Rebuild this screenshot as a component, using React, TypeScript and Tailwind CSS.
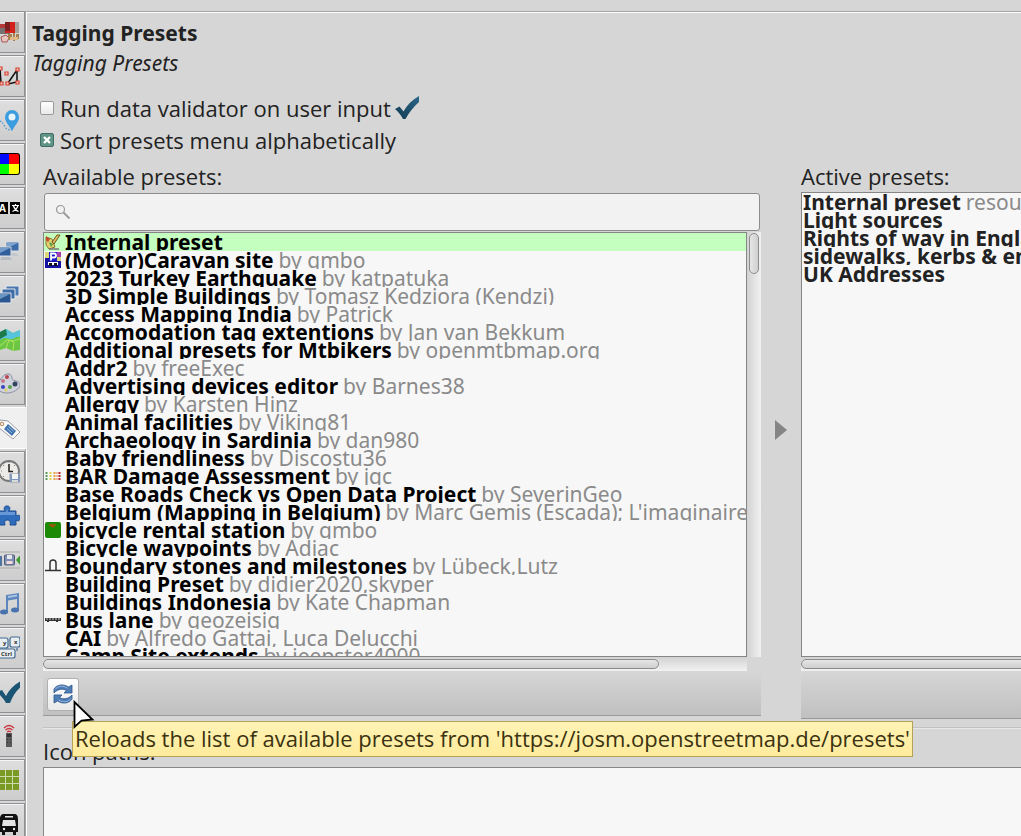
import React, { useState } from 'react';
import { clsx } from 'clsx';

interface Preset {
  name: string;
  note?: string;
  icon?: React.ReactNode;
}

interface PrefTab {
  id: string;
  label: string;
  icon: React.ReactNode;
}

const CheckMark = ({ className }: { className?: string }) => (
  <svg viewBox="0 0 24 24" className={className} aria-hidden="true">
    <defs>
      <linearGradient id="checkFill" x1="0" y1="1" x2="1" y2="0">
        <stop offset="0" stopColor="#123a52" />
        <stop offset="1" stopColor="#2b6788" />
      </linearGradient>
    </defs>
    <path d="M0 13 L4.500 10.500 L8.500 15.500 C12 9 17 4 24 0 V6 C18.500 11 14.500 16 10.500 23 H8 C6 19 3.500 16 0 13Z" fill="url(#checkFill)" />
  </svg>
);

const tabs: PrefTab[] = [
  {
    id: 'display',
    label: 'Display',
    icon: (
      <>
        <rect x="0" y="4" width="10" height="10" fill="#77726f" />
        <path d="M0 4h8v4H0z" fill="#b33a36" />
        <rect x="5" y="2" width="14" height="11" fill="#d3211c" />
        <path d="M5 2h5v9H5z" fill="#7d2020" />
        <path d="M15 2h4v11h-4z" fill="#a9a09b" />
        <path d="M1 17l5-2 3 3-2 4H2z" fill="#e4c6bf" stroke="#a55" />
        <path d="M8 14h4v6H8zM13 13h2v8h-2zM16 14h3v5h-3z" fill="#a8804f" />
        <path d="M10 17h8v3h-8z" fill="#dcb987" />
      </>
    ),
  },
  {
    id: 'validator-geometry',
    label: 'Geometry',
    icon: (
      <>
        <path d="M0 4L1 19M8 19L17 6V18L8 20" stroke="#111" strokeWidth="1.500" fill="none" />
        <g fill="#f6c9c2" stroke="#d8402f" strokeWidth="1.200">
          <path d="M-1 3h3v3h-3zM16 4h3v3h-3zM5 8h3v3H5zM0 18h3v3H0zM6 18h3v3H6zM16 17h3v3h-3z" />
        </g>
      </>
    ),
  },
  {
    id: 'gps',
    label: 'GPS points',
    icon: (
      <>
        <path d="M0 13c3 1 3 3 5 6s5 3 7 3" stroke="#3b95d4" strokeWidth="1.200" strokeDasharray="1.500 1.500" fill="none" />
        <path d="M12 2a7 7 0 0 1 7 7c0 5-4 8-7 14C9 17 5 14 5 9a7 7 0 0 1 7-7z" fill="#3b9ddf" />
        <circle cx="12" cy="9" r="3.500" fill="#e6f3fb" />
      </>
    ),
  },
  {
    id: 'colors',
    label: 'Colors',
    icon: (
      <>
        <rect x="-6" y="1" width="26" height="22" rx="3" fill="#000" />
        <path d="M0 2h9v10H0z" fill="#0008ff" />
        <path d="M9 2h8q2 0 2 2v8H9z" fill="#f00" />
        <path d="M0 12h9v10H0z" fill="#0f0" />
        <path d="M9 12h10v8q0 2-2 2H9z" fill="#ff0" />
      </>
    ),
  },
  {
    id: 'language',
    label: 'Language',
    icon: (
      <>
        <rect x="-2" y="6" width="10" height="12" fill="#000" />
        <rect x="10" y="6" width="11" height="12" fill="#000" />
        <text x="-1" y="16" fontSize="10" fontWeight="700" fill="#fff">A</text>
        <path d="M12 9.500h7M15.500 8v1.500M18 9.500c-1 3-3 5-5.500 6M13.500 10c1 3 2.500 4.500 5 5.500" stroke="#fff" strokeWidth="1.200" fill="none" />
      </>
    ),
  },
  {
    id: 'remote-servers',
    label: 'Servers',
    icon: (
      <>
        <path d="M10 13h6l3 3H8z" fill="#c4c8cc" />
        <path d="M6 2h13v9H6z" fill="#3c6ca8" stroke="#d8dde2" />
        <path d="M7 3h11L7 8z" fill="#7ca4d0" />
        <path d="M2 17h8l2 3H0z" fill="#b7bcc2" />
        <path d="M-3 7h14v9H-3z" fill="#315f9b" stroke="#d8dde2" />
        <path d="M0 8h10L0 13z" fill="#739cca" />
      </>
    ),
  },
  {
    id: 'windows',
    label: 'Windows',
    icon: (
      <>
        <path d="M4 19h14l2 3H2z" fill="#cfd0d2" />
        <path d="M6 2h13v10H6z" fill="#4b78b1" stroke="#e4e8ec" />
        <path d="M2 5h13v10H2z" fill="#3d6ca7" stroke="#e4e8ec" />
        <path d="M-3 9h14v10H-3z" fill="#2b5690" stroke="#e4e8ec" />
        <path d="M0 10h10L0 15z" fill="#6b95c5" />
      </>
    ),
  },
  {
    id: 'map',
    label: 'Map projection',
    icon: (
      <>
        <path d="M0 4l6-3 7 4 7-3v20l-7 1-7-3-6 2z" fill="#6cc644" />
        <path d="M0 4l6-3 7 4 7-3v7c-5-1-6 3-10 2s-6-2-10 1z" fill="#57c3dc" />
        <path d="M0 4l6-3 1 6-7 4z" fill="#1d7a4c" />
        <path d="M0 18l7-6 6 1 7-2" stroke="#8fdc5a" strokeWidth="1.500" fill="none" />
        <path d="M6 20l3-8 5 2-1 9" stroke="#b4e35a" fill="none" />
      </>
    ),
  },
  {
    id: 'paint',
    label: 'Map paint styles',
    icon: (
      <>
        <path d="M-3 14C1 5 5 1 9 2s2 5 4 6 7 1 7 5-7 8-13 8-10-3-10-7z" fill="#d0d3dd" stroke="#8c91a3" />
        <circle cx="7" cy="5" r="2" fill="#b8464e" />
        <circle cx="3" cy="9" r="2" fill="#c27a8a" />
        <circle cx="15" cy="12" r="2.500" fill="#32445e" />
        <circle cx="10" cy="15" r="2" fill="#5fa54a" />
        <circle cx="3" cy="15" r="2" fill="#3745b9" />
        <circle cx="6" cy="18" r="1.500" fill="#ddd060" />
      </>
    ),
  },
  {
    id: 'presets',
    label: 'Tagging Presets',
    icon: (
      <>
        <path d="M-2 8L0 4l8 1 12 11-7 7L-2 11z" fill="#fbfbfb" stroke="#999da3" />
        <circle cx="2" cy="8" r="1.800" fill="#eee" stroke="#b58450" />
        <path d="M8 8l8 7-4 5-8-7z" fill="#3f72ae" />
        <path d="M8.500 10.500l5 4.500M7 12.500l5 4.500" stroke="#b9d0ea" strokeWidth=".8" />
      </>
    ),
  },
  {
    id: 'autosave',
    label: 'Autosave',
    icon: (
      <>
        <circle cx="9" cy="11" r="10" fill="#ecebe7" stroke="#777" strokeWidth="1.800" />
        <path d="M9 4v7.500h4" stroke="#222" strokeWidth="1.500" fill="none" />
        <path d="M9 2v1M1 11h1M3 5l1 1M15 5l-1 1M3 17l1-1" stroke="#888" />
        <rect x="10" y="14" width="10" height="8" fill="#7d9ac2" stroke="#8d99ab" />
        <rect x="12" y="14" width="6" height="5" fill="#f4f4f4" />
        <rect x="12" y="20" width="6" height="2" fill="#d9d9d9" />
      </>
    ),
  },
  {
    id: 'plugins',
    label: 'Plugins',
    icon: (
      <>
        <path d="M-3 7h8c-2-4 0-5 2-5s4 1 2 5h7v5c4-2 4 0 4 2s-1 4-4 2v5H10c1-4-1-5-3-5s-3 2-2 5h-8z" fill="#2f6cbc" stroke="#1c4d92" />
        <path d="M-2 8h8l1-4 1 4h7v3H-2z" fill="#6698d6" />
      </>
    ),
  },
  {
    id: 'downloads',
    label: 'Offline mode',
    icon: (
      <>
        <path d="M0 4h20M0 20h20" stroke="#aaa" />
        <rect x="-6" y="8" width="8" height="10" fill="#5074a2" />
        <rect x="4.500" y="7" width="10" height="10" rx="1" fill="#7e8fb2" stroke="#515c78" />
        <rect x="7" y="7" width="5" height="4" fill="#e5e8ef" />
        <rect x="6.500" y="13" width="6" height="3" fill="#f2d9d9" />
        <path d="M21 6v12l-5-6z" fill="#3f9b31" />
      </>
    ),
  },
  {
    id: 'audio',
    label: 'Audio',
    icon: (
      <>
        <path d="M6 3l13-2v17h-2V7L8 8.500V20H6z" fill="#5c86bd" />
        <ellipse cx="4" cy="20" rx="4" ry="2.500" fill="#4873ad" />
        <ellipse cx="15" cy="18" rx="4" ry="2.500" fill="#4873ad" />
        <path d="M8 4l9-1.500v2L8 6z" fill="#a9c3e2" />
      </>
    ),
  },
  {
    id: 'shortcuts',
    label: 'Keyboard shortcuts',
    icon: (
      <>
        <g fill="#e8edf1" stroke="#426b91" strokeWidth="1.200">
          <rect x="-3" y="2" width="11" height="10" rx="2" />
          <rect x="10" y="1" width="10" height="10" rx="2" />
          <rect x="-6" y="13" width="21" height="9" rx="2" />
          <path d="M17 12v3" />
        </g>
        <g fontSize="6" fontWeight="700" fill="#333">
          <text x="3" y="9">y</text>
          <text x="14" y="8">x</text>
          <text x="1" y="20">Ctrl</text>
        </g>
      </>
    ),
  },
  {
    id: 'validator',
    label: 'Data validator',
    icon: <path d="M-3 12l5-2 4 6C9 10 14 5 21 1v6c-5 4-8 9-11 16H6C3 18 0 15-3 12z" fill="#1c5474" />,
  },
  {
    id: 'remote-control',
    label: 'Remote control',
    icon: (
      <>
        <path d="M4 4q5-5 10 0M5.500 6q3.500-3 7 0M7 8q2-1.500 4 0" stroke="#c8353c" strokeWidth="1.300" fill="none" />
        <rect x="6" y="9" width="6" height="14" fill="#5a5a5a" />
        <path d="M7 10h4v3H7zM7 15h1v1H7zM10 15h1v1h-1zM7 18h1v1H7zM10 18h1v1h-1z" fill="#333" />
      </>
    ),
  },
  {
    id: 'imagery',
    label: 'Imagery',
    icon: (
      <>
        <path d="M0 2h19v20H0z" fill="#799b26" />
        <path d="M0 8.500h19M0 15.500h19M5.500 2v20M12.500 2v20" stroke="#d0dbad" />
      </>
    ),
  },
  {
    id: 'transport',
    label: 'Public transport',
    icon: (
      <>
        <path d="M4 2h10c3 0 4 2 4 5v13h-2v3h-3v-3H5v3H2v-3H0V7c0-3 1-5 4-5z" fill="#111" />
        <path d="M5 4h8v1.500H5zM3 8h12l1 6H2z" fill="#e4e4e4" />
        <circle cx="4" cy="17" r="1.200" fill="#e4e4e4" />
        <circle cx="14" cy="17" r="1.200" fill="#e4e4e4" />
      </>
    ),
  },
];

const availablePresets: Preset[] = [
  {
    name: 'Internal preset',
    icon: (
      <>
        <path d="M1 3l6 2 3 8-6 2-3-4z" fill="#dfcf6e" stroke="#8a7332" />
        <path d="M1 2l4 3-2 3-2-2z" fill="#c44a2e" />
        <path d="M15 1l-6 9-2-2 5-7z" fill="#e3ba5b" stroke="#6a5420" />
        <path d="M4 15h10" stroke="#777" strokeWidth="1.500" />
        <path d="M4 8l4 2-2 3z" fill="#549a45" />
      </>
    ),
  },
  {
    name: '(Motor)Caravan site',
    note: 'by gmbo',
    icon: (
      <>
        <path d="M0 0h16v16H0z" fill="#1414a0" />
        <path d="M0 0h4v6H0zM12 5h4v4h-4z" fill="#ddd77b" />
        <path d="M11 0h5v5h-5z" fill="#a43fae" />
        <path d="M4 0h8v9H4z" fill="#1c1ccc" />
        <path d="M6 8.500V1.500h3q2 0 2 2t-2 2H6" stroke="#fff" strokeWidth="1.800" fill="none" />
        <path d="M3 10h10v3H3z" fill="#fff" />
        <path d="M4 11h3v3H4zM9 11h3v3H9z" fill="#111" />
      </>
    ),
  },
  { name: '2023 Turkey Earthquake', note: 'by katpatuka' },
  { name: '3D Simple Buildings', note: 'by Tomasz Kedziora (Kendzi)' },
  { name: 'Access Mapping India', note: 'by Patrick' },
  { name: 'Accomodation tag extentions', note: 'by Jan van Bekkum' },
  { name: 'Additional presets for Mtbikers', note: 'by openmtbmap.org' },
  { name: 'Addr2', note: 'by freeExec' },
  { name: 'Advertising devices editor', note: 'by Barnes38' },
  { name: 'Allergy', note: 'by Karsten Hinz' },
  { name: 'Animal facilities', note: 'by Viking81' },
  { name: 'Archaeology in Sardinia', note: 'by dan980' },
  { name: 'Baby friendliness', note: 'by Discostu36' },
  {
    name: 'BAR Damage Assessment',
    note: 'by jgc',
    icon: (
      <g strokeWidth="2" strokeDasharray="2 1">
        <path d="M1.500 4v8" stroke="#5a9a58" />
        <path d="M5.500 4v8" stroke="#dfd34c" />
        <path d="M9.500 4v8" stroke="#e2a03c" />
        <path d="M12 4v8" stroke="#e8774e" strokeWidth="1" />
        <path d="M14.500 4v8" stroke="#b32626" />
      </g>
    ),
  },
  { name: 'Base Roads Check vs Open Data Project', note: 'by SeverinGeo' },
  { name: 'Belgium (Mapping in Belgium)', note: "by Marc Gemis (Escada); L'imaginaire" },
  {
    name: 'bicycle rental station',
    note: 'by gmbo',
    icon: (
      <>
        <rect width="16" height="16" rx="2" fill="#1d8a06" />
        <path d="M4 3h7M6 4l3 1" stroke="#a2560c" strokeWidth="1.500" />
      </>
    ),
  },
  { name: 'Bicycle waypoints', note: 'by Adiac' },
  {
    name: 'Boundary stones and milestones',
    note: 'by Lübeck,Lutz',
    icon: <path d="M0 12.500h16M5 12V5q0-3 3-3t3 3v7" stroke="#333" strokeWidth="1.500" fill="none" />,
  },
  { name: 'Building Preset', note: 'by didier2020,skyper' },
  { name: 'Buildings Indonesia', note: 'by Kate Chapman' },
  {
    name: 'Bus lane',
    note: 'by geozeisig',
    icon: (
      <>
        <path d="M0 6h16v3H0z" fill="#333" />
        <path d="M1 7h14" stroke="#ccc" strokeDasharray="2 1" />
        <path d="M2 9h2v1H2zM11 9h2v1h-2z" fill="#333" />
      </>
    ),
  },
  { name: 'CAI', note: 'by Alfredo Gattai, Luca Delucchi' },
  { name: 'Camp Site extends', note: 'by jeepster4000' },
];

const activePresets: Preset[] = [
  { name: 'Internal preset', note: 'resource://data/defaultpresets.xml' },
  { name: 'Light sources' },
  { name: 'Rights of way in England and Wales' },
  { name: 'sidewalks, kerbs & entrances' },
  { name: 'UK Addresses' },
];

const SideTabs = ({ activeTab, onSelect }: { activeTab: string; onSelect: (id: string) => void }) => (
  <nav className="flex w-[25px] shrink-0 flex-col gap-0.5" aria-label="Preferences">
    {tabs.map(tab => (
      <button
        key={tab.id}
        type="button"
        aria-label={tab.label}
        onClick={() => onSelect(tab.id)}
        className={clsx(
          'flex h-[42px] shrink-0 items-center border-y',
          tab.id === activeTab
            ? 'relative z-10 w-[27px] border-white bg-[#f0f0f0]'
            : 'w-[25px] border-r border-[#8f9094] bg-linear-to-b from-[#dedede] to-[#cdcdcd] shadow-[inset_0_1px_0_#f5f5f5]'
        )}
      >
        <svg viewBox="0 0 20 24" className="h-6 w-5" aria-hidden="true">
          {tab.icon}
        </svg>
      </button>
    ))}
  </nav>
);

interface CheckOptionProps {
  id: string;
  label: string;
  checked: boolean;
  onChange: (value: boolean) => void;
  children?: React.ReactNode;
}

const CheckOption = ({ id, label, checked, onChange, children }: CheckOptionProps) => (
  <div className="flex h-8 items-center">
    <span className="mr-1.5 grid">
      <input
        id={id}
        type="checkbox"
        checked={checked}
        onChange={e => onChange(e.target.checked)}
        className="col-start-1 row-start-1 size-3.5 appearance-none rounded-xs border border-[#9a9a9a] bg-linear-to-b from-white to-[#eaeaea] checked:border-[#3e6d61] checked:from-[#5f9385] checked:to-[#5f9385]"
      />
      {checked && (
        <svg viewBox="0 0 14 14" className="pointer-events-none col-start-1 row-start-1 size-3.5" aria-hidden="true">
          <path d="M4 4l6 6M10 4l-6 6" stroke="#fff" strokeWidth="2.400" />
        </svg>
      )}
    </span>
    <label htmlFor={id}>{label}</label>
    {children}
  </div>
);

const PresetRow = ({ preset, selected, iconSlot }: { preset: Preset; selected?: boolean; iconSlot?: boolean }) => (
  <li
    className={clsx(
      "flex h-[18px] overflow-hidden font-['Noto_Sans',sans-serif] text-[21px] leading-[18px] whitespace-nowrap",
      selected && 'bg-[#c4ffc0]'
    )}
  >
    {iconSlot && (
      <span className="w-[21px] shrink-0 pt-px pl-px">
        {preset.icon && (
          <svg viewBox="0 0 16 16" className="size-4" aria-hidden="true">
            {preset.icon}
          </svg>
        )}
      </span>
    )}
    <span className="font-bold">{preset.name}</span>
    {preset.note && <span className="ml-[5px] text-[#8a8a8a]">{preset.note}</span>}
  </li>
);

const HorizontalScroll = ({ className }: { className: string }) => (
  <div className="h-3.5 bg-linear-to-b from-[#d2d2d2] to-[#f2f2f2] py-0.5">
    <div className={clsx('h-2.5 rounded-full border border-[#8c8c8c] bg-linear-to-b from-[#e6e6e6] to-[#cfcfcf]', className)} />
  </div>
);

const ReloadIcon = () => (
  <svg viewBox="0 0 20 20" className="size-5" aria-hidden="true">
    <g fill="#4f7db5" stroke="#2d568c" strokeWidth=".8" strokeLinejoin="round">
      <path d="M1 9V5C4 0 11 0 15.500 3L19 1v8h-8l2.500-2.500C10 4.500 5 4.500 1 9z" />
      <path d="M19 11v4c-3 5-10 5-14.500 2L1 19v-8h8l-2.500 2.500c3.500 2 8.500 2 12.500-2.500z" />
    </g>
    <path d="M2 5.500C5 1.500 10 1.500 14.500 4M18 14.500c-3 4-8 4-12.500 1.500" stroke="#a5c3e4" strokeWidth=".8" fill="none" />
  </svg>
);

export default function App() {
  const [activeTab, setActiveTab] = useState('presets');
  const [validate, setValidate] = useState(false);
  const [sortMenu, setSortMenu] = useState(true);
  const [filter, setFilter] = useState('');

  const filtered = availablePresets.filter(p => p.name.toLowerCase().includes(filter.toLowerCase()));

  return (
    <div className="flex h-screen overflow-hidden bg-[#d6d6d6] pt-[11px] font-['Open_Sans','Noto_Sans',sans-serif] text-[22px] leading-[30px] text-[#222]">
      <SideTabs activeTab={activeTab} onSelect={setActiveTab} />

      <main className="flex min-w-0 flex-1 flex-col border-t border-l border-[#a6a6a6] shadow-[inset_1px_1px_0_#fff]">
        <header className="px-1.5 pt-1.5 font-['Noto_Sans',sans-serif] text-[21px]">
          <h1 className="font-bold">Tagging Presets</h1>
          <p className="italic">Tagging Presets</p>
        </header>

        <div className="mt-3.5 ml-3.5">
          <CheckOption id="validate" label="Run data validator on user input" checked={validate} onChange={setValidate}>
            <CheckMark className="ml-1 size-6" />
          </CheckOption>
          <CheckOption id="sort" label="Sort presets menu alphabetically" checked={sortMenu} onChange={setSortMenu} />
        </div>

        <div className="mt-[5px] ml-[17px] grid min-h-0 flex-1 grid-cols-[minmax(0,1fr)_40px_220px]">
          <section className="flex min-h-0 flex-col">
            <label htmlFor="filter">Available presets:</label>
            <div className="mx-px mt-0.5 flex h-[38px] shrink-0 items-center rounded-[3px] border border-[#8c8c8c] bg-[#f2f2f2] px-2.5">
              <svg viewBox="0 0 16 16" className="size-4 shrink-0" fill="none" stroke="#999" aria-hidden="true">
                <circle cx="5.500" cy="5.500" r="4" strokeWidth="1.200" />
                <path d="M8.500 8.500l6 6" strokeWidth="1.800" />
              </svg>
              <input
                id="filter"
                type="text"
                value={filter}
                onChange={e => setFilter(e.target.value)}
                className="ml-2 min-w-0 flex-1 bg-transparent outline-none"
              />
            </div>
            <div className="mt-px flex min-h-0 flex-1">
              <ul className="min-w-0 flex-1 overflow-hidden border border-[#868686] bg-[#f7f7f7] text-black">
                {filtered.map((preset, i) => (
                  <PresetRow key={preset.name} preset={preset} selected={i === 0} iconSlot />
                ))}
              </ul>
              <div className="w-3.5 bg-linear-to-r from-[#d2d2d2] to-[#f2f2f2] px-0.5 pt-px">
                <div className="h-[41px] rounded-full border border-[#8c8c8c] bg-linear-to-r from-[#e6e6e6] to-[#cfcfcf]" />
              </div>
            </div>
            <div className="mr-3.5">
              <HorizontalScroll className="w-7/8" />
            </div>
            <div className="mb-[3px] flex h-[45px] items-center border-b border-[#999] bg-linear-to-b from-[#d6d6d6] to-[#c0c0c0] px-1 pt-0.5">
              <div className="relative">
                <button
                  type="button"
                  aria-label="Reload"
                  className="flex h-[33px] w-8 items-center justify-center rounded-[3px] border border-[#b0b0b0] bg-linear-to-b from-white to-[#e9e9e9]"
                >
                  <ReloadIcon />
                </button>
                <div
                  role="tooltip"
                  className="absolute top-[43px] left-[25px] z-10 h-9 border border-[#b5a255] bg-linear-to-b from-[#fff3b4] to-[#ffeb9c] px-0.5 leading-8 whitespace-nowrap text-[#3a3210]"
                >
                  Reloads the list of available presets from 'https://josm.openstreetmap.de/presets'
                </div>
                <svg viewBox="0 0 22 30" className="absolute top-[22px] left-[26px] z-20 h-[30px] w-[22px]" aria-hidden="true">
                  <path d="M1.500 2v25l7-6.500 11-1z" fill="#fff" stroke="#000" strokeWidth="1.800" />
                </svg>
              </div>
            </div>
          </section>

          <div className="flex items-center justify-center pb-5">
            <button type="button" aria-label="Activate preset">
              <svg viewBox="0 0 12 22" className="h-[22px] w-3" aria-hidden="true">
                <path d="M0 1v20l12-10z" fill="#858585" />
              </svg>
            </button>
          </div>

          <section className="flex min-h-0 min-w-0 flex-col">
            <h2>Active presets:</h2>
            <ul className="mt-px min-h-0 flex-1 overflow-hidden border border-r-0 border-[#868686] bg-[#f7f7f7] pl-px">
              {activePresets.map(preset => (
                <PresetRow key={preset.name} preset={preset} />
              ))}
            </ul>
            <div className="overflow-hidden">
              <HorizontalScroll className="w-[110%]" />
            </div>
            <div className="h-12 border-b border-[#999] bg-linear-to-b from-[#d6d6d6] to-[#c0c0c0]" />
          </section>
        </div>

        <hr className="mt-2 ml-[17px] border-t border-[#c2c2c2] shadow-[0_1px_0_#e8e8e8]" />

        <div className="mt-2 ml-[17px] flex flex-col gap-px">
          <label htmlFor="icon-paths">Icon paths:</label>
          <textarea
            id="icon-paths"
            className="h-[69px] resize-none border-t border-l border-[#868686] bg-[#f7f7f7] outline-none"
          />
        </div>
      </main>
    </div>
  );
}
